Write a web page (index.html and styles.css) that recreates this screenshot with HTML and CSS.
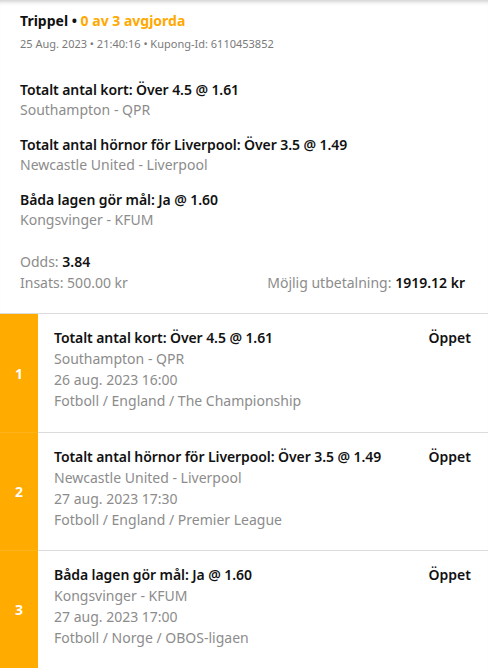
FILE: index.html
```html
<!DOCTYPE html>
<html>
<head>
<meta charset="utf-8">
<link rel="stylesheet" href="styles.css">
</head>
<body>
<div class="page">
  <header class="head">
    <div class="title"><span class="type">Trippel</span> • <span class="status">0 av 3 avgjorda</span></div>
    <div class="meta">25 Aug. 2023 • 21:40:16 • Kupong-Id: 6110453852</div>
  </header>
  <section class="picks">
    <div class="pick">
      <div class="pick-name">Totalt antal kort: Över 4.5 @ 1.61</div>
      <div class="pick-event">Southampton - QPR</div>
    </div>
    <div class="pick">
      <div class="pick-name">Totalt antal hörnor för Liverpool: Över 3.5 @ 1.49</div>
      <div class="pick-event">Newcastle United - Liverpool</div>
    </div>
    <div class="pick">
      <div class="pick-name">Båda lagen gör mål: Ja @ 1.60</div>
      <div class="pick-event">Kongsvinger - KFUM</div>
    </div>
  </section>
  <section class="summary">
    <div class="sum-line"><span class="label">Odds: </span><b class="val">3.84</b></div>
    <div class="sum-row">
      <div class="sum-line"><span class="label">Insats: 500.00 kr</span></div>
      <div class="sum-line"><span class="label">Möjlig utbetalning: </span><b class="val">1919.12 kr</b></div>
    </div>
  </section>
  <section class="legs">
    <div class="leg">
      <div class="leg-num">1</div>
      <div class="leg-body">
        <div class="leg-top">
          <div class="leg-name">Totalt antal kort: Över 4.5 @ 1.61</div>
          <div class="leg-state">Öppet</div>
        </div>
        <div class="leg-info">Southampton - QPR</div>
        <div class="leg-info">26 aug. 2023 16:00</div>
        <div class="leg-info">Fotboll / England / The Championship</div>
      </div>
    </div>
    <div class="leg">
      <div class="leg-num">2</div>
      <div class="leg-body">
        <div class="leg-top">
          <div class="leg-name">Totalt antal hörnor för Liverpool: Över 3.5 @ 1.49</div>
          <div class="leg-state">Öppet</div>
        </div>
        <div class="leg-info">Newcastle United - Liverpool</div>
        <div class="leg-info">27 aug. 2023 17:30</div>
        <div class="leg-info">Fotboll / England / Premier League</div>
      </div>
    </div>
    <div class="leg">
      <div class="leg-num">3</div>
      <div class="leg-body">
        <div class="leg-top">
          <div class="leg-name">Båda lagen gör mål: Ja @ 1.60</div>
          <div class="leg-state">Öppet</div>
        </div>
        <div class="leg-info">Kongsvinger - KFUM</div>
        <div class="leg-info">27 aug. 2023 17:00</div>
        <div class="leg-info">Fotboll / Norge / OBOS-ligaen</div>
      </div>
    </div>
  </section>
</div>
</body>
</html>
```
FILE: styles.css
```css
* { box-sizing: border-box; }
html, body { margin: 0; padding: 0; background: #fff; }
body {
  font-family: "Noto Sans", "Open Sans", sans-serif;
  color: #111;
  font-size: 14px;
  width: 488px;
  height: 668px;
  overflow: hidden;
}
.page {
  box-shadow: inset 0 5px 5px -4px rgba(0,0,0,0.25);
}
.head {
  padding: 11px 20px 0;
}
.title {
  font-weight: 700;
  font-size: 14px;
  line-height: 20px;
}
.status { color: #ffa800; }
.meta {
  font-size: 11px;
  line-height: 16px;
  margin-top: 5px;
  color: #7a7a7a;
}
.picks {
  padding: 28px 20px 0;
  display: flex;
  flex-direction: column;
  gap: 16px;
}
.pick-name { font-weight: 600; line-height: 20px; letter-spacing: -0.08px; }
.pick-event { color: #8c8c8c; line-height: 19px; }
.summary {
  padding: 22px 20px 20px;
  border-bottom: 1px solid #dcdcdc;
}
.sum-line { line-height: 21px; color: #111; }
.label { color: #8c8c8c; }
.val { font-weight: 600; }
.sum-row {
  display: flex;
  justify-content: space-between;
  padding-right: 3px;
}
.leg {
  display: flex;
  height: 118px;
}
.leg-num {
  width: 38px;
  flex: none;
  background: #ffab00;
  color: #fff;
  font-weight: 700;
  display: flex;
  align-items: center;
  justify-content: center;
  border-top: 1px solid #ffb31a;
}
.leg:first-child .leg-num { border-top: none; }
.leg-body {
  flex: 1;
  padding: 13px 17px 0 16px;
  border-top: 1px solid #dcdcdc;
}
.leg:first-child .leg-body { border-top: none; }
.leg-top {
  display: flex;
  justify-content: space-between;
  gap: 12px;
}
.leg-name { font-weight: 600; line-height: 21px; letter-spacing: -0.08px; }
.leg-state { font-weight: 600; line-height: 21px; }
.leg-info { color: #8c8c8c; line-height: 21px; }
```
